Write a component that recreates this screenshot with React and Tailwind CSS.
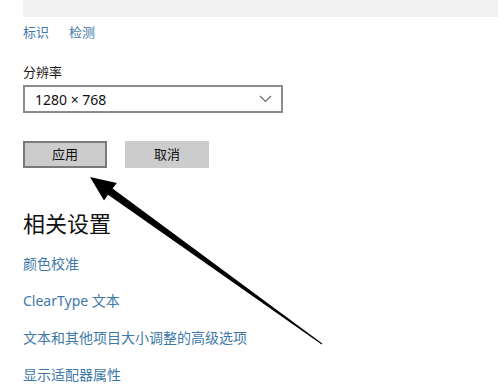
import React from "react";

const font = { fontFamily: '"Noto Sans", "Noto Sans CJK SC", sans-serif' };

export default function App() {
  return (
    <div className="relative w-[498px] h-[390px] bg-white overflow-hidden" style={font}>
      <div className="ml-[23px] h-[17px] bg-[#f2f2f2]" />
      <div className="pl-[23px] flex flex-col">
        <div className="flex gap-[20px] mt-[6px] h-[20px] items-center text-[13px] text-[#4079a8]">
          <span>标识</span>
          <span>检测</span>
        </div>
        <div className="mt-[20px] h-[20px] flex items-center text-[13px] text-[#1a1a1a]">分辨率</div>
        <div className="mt-[2px] w-[260px] h-[28px] border-2 border-[#8c8c8c] flex items-center justify-between pl-[10px] pr-[8px] text-[14px] text-[#111]">
          <span>1280 × 768</span>
          <svg width="13" height="8" viewBox="0 0 13 8" className="mr-[1px]">
            <path d="M1 1 L6.5 6.5 L12 1" fill="none" stroke="#6b6b6b" strokeWidth="1.2" />
          </svg>
        </div>
        <div className="mt-[28px] flex gap-[18px]">
          <div className="w-[84px] h-[27px] border-2 border-[#7a7a7a] bg-[#cccccc] flex items-center justify-center text-[13px] text-[#111]">应用</div>
          <div className="w-[84px] h-[27px] bg-[#cccccc] flex items-center justify-center text-[13px] text-[#111]">取消</div>
        </div>
        <div className="mt-[40px] h-[30px] flex items-center text-[22px] text-[#111]">相关设置</div>
        <div className="flex flex-col text-[14px] text-[#4079a8]">
          <div className="mt-[15px] h-[20px] flex items-center">颜色校准</div>
          <div className="mt-[17px] h-[20px] flex items-center">ClearType 文本</div>
          <div className="mt-[17px] h-[20px] flex items-center">文本和其他项目大小调整的高级选项</div>
          <div className="mt-[17px] h-[20px] flex items-center">显示适配器属性</div>
        </div>
      </div>
      <svg className="absolute left-0 top-0 pointer-events-none" width="498" height="390" viewBox="0 0 498 390">
        <polygon points="90,177 104,200.5 108,194.8 321.7,344.4 322.3,343.6 112.6,188.4 116.8,183" fill="#000" />
      </svg>
    </div>
  );
}
